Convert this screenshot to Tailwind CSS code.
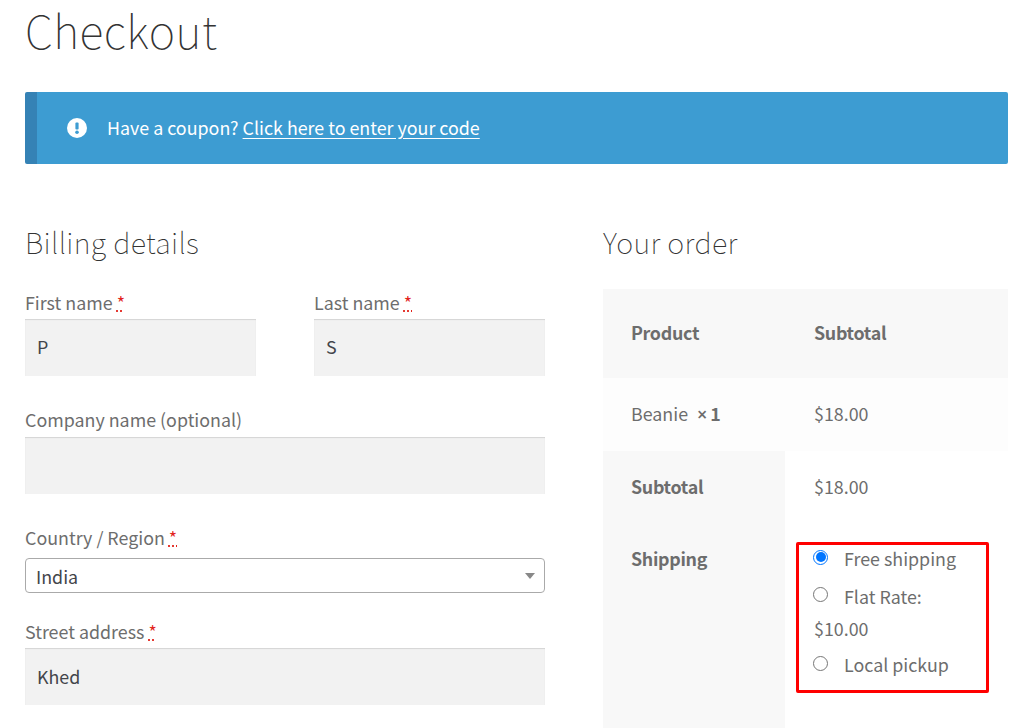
<!doctype html>
<html>
<head>
<meta charset="utf-8">
<script src="https://cdn.jsdelivr.net/npm/@tailwindcss/browser@4"></script>
</head>
<body class="bg-white overflow-hidden">
<div class="w-[1025px] h-[728px] overflow-hidden pl-[25px] pr-[17px] text-[#6d6d6d] text-[17.85px] font-['Noto_Sans_CJK_SC','Source_Sans_Pro',sans-serif]">
  <h1 class="h-[92px] text-[44.9px] leading-[60px] tracking-[0.5px] font-thin text-[#333333]">Checkout</h1>
  <div class="h-[72px] flex items-center bg-[#3d9cd2] border-l-[12px] border-[#3582b5] rounded-[2px] text-white">
    <svg class="ml-[30px] w-[20px] h-[20px]" viewBox="0 0 20 20"><circle cx="10" cy="10" r="10" fill="#fff"/><rect x="8.4" y="4.5" width="3.2" height="7" rx="1" fill="#3d9cd2"/><circle cx="10" cy="14.2" r="1.8" fill="#3d9cd2"/></svg>
    <p class="ml-[20px] leading-[28px] pb-[2px]">Have a coupon? <a class="underline underline-offset-[3px]">Click here to enter your code</a></p>
  </div>
  <div class="flex gap-[58px] mt-[54px]">
    <div class="w-[520px]">
      <h3 class="h-[46px] text-[28.9px] leading-[46px] tracking-[0.33px] font-thin text-[#333333]">Billing details</h3>
      <div class="mt-[23px] flex gap-[58px]">
        <div class="w-[231px]">
          <div class="h-[31px] mt-[1px] leading-[28px]">First name <span class="text-[#e2231a] underline decoration-dotted">*</span></div>
          <div class="h-[57px] px-[12px] pb-[2px] flex items-center bg-[#f2f2f2] shadow-[inset_0_1px_1px_rgba(0,0,0,0.125)] text-[#43454b]">P</div>
        </div>
        <div class="w-[231px]">
          <div class="h-[31px] mt-[1px] leading-[28px]">Last name <span class="text-[#e2231a] underline decoration-dotted">*</span></div>
          <div class="h-[57px] px-[12px] pb-[2px] flex items-center bg-[#f2f2f2] shadow-[inset_0_1px_1px_rgba(0,0,0,0.125)] text-[#43454b]">S</div>
        </div>
      </div>
      <div class="h-[32px] mt-[29px] leading-[28px]">Company name (optional)</div>
      <div class="h-[57px] bg-[#f2f2f2] shadow-[inset_0_1px_1px_rgba(0,0,0,0.125)]"></div>
      <div class="h-[30px] mt-[29px] leading-[28px]">Country / Region <span class="text-[#e2231a] underline decoration-dotted">*</span></div>
      <div class="relative h-[35px] mt-[5px] pl-[10px] pt-[2px] flex items-center border border-[#aaaaaa] rounded-[4px] text-[#43454b]">India
        <span class="absolute right-[9px] top-[14px] w-0 h-0 border-x-[5px] border-x-transparent border-t-[6px] border-t-[#888888]"></span>
      </div>
      <div class="h-[31px] mt-[24px] leading-[28px]">Street address <span class="text-[#e2231a] underline decoration-dotted">*</span></div>
      <div class="h-[57px] px-[12px] flex items-center bg-[#f2f2f2] shadow-[inset_0_1px_1px_rgba(0,0,0,0.125)] text-[#43454b]">Khed</div>
    </div>
    <div class="w-[405px]">
      <h3 class="h-[46px] text-[28.9px] leading-[46px] tracking-[0.33px] font-thin text-[#333333]">Your order</h3>
      <div class="mt-[25px] grid grid-cols-[182px_223px] grid-rows-[89px_73px_73px_1fr] h-[500px]">
        <div class="bg-[#f8f8f8] pl-[28px] pb-[2px] flex items-center font-semibold tracking-[-0.3px]">Product</div>
        <div class="bg-[#f8f8f8] pl-[29px] pb-[2px] flex items-center font-semibold tracking-[-0.3px]">Subtotal</div>
        <div class="bg-[#fdfdfd] pl-[28px] pb-[2px] flex items-center">Beanie<span class="ml-[9px] font-semibold"><span class="font-['Noto_Sans'] text-[18px]">×</span><span class="ml-[3px]">1</span></span></div>
        <div class="bg-[#fdfdfd] pl-[29px] pb-[2px] flex items-center">$18.00</div>
        <div class="bg-[#f8f8f8] pl-[28px] pb-[2px] flex items-center font-semibold tracking-[-0.3px]">Subtotal</div>
        <div class="pl-[29px] pb-[2px] flex items-center">$18.00</div>
        <div class="bg-[#f8f8f8] pl-[28px] pt-[20px] leading-[28px] font-semibold tracking-[-0.3px]">Shipping</div>
        <div class="relative pl-[28px]">
          <div class="absolute left-[11px] top-[18px] w-[193px] h-[151px] border-[3px] border-[#ff0000] rounded-[2px]"></div>
          <div class="pt-[20px] flex items-center h-[48px] mb-[4px] leading-[28px]">
            <span class="w-[15px] h-[15px] rounded-full border border-[#0075ff] mr-[16px] flex items-center justify-center relative top-[-1px]"><span class="w-[10px] h-[10px] rounded-full bg-[#0075ff]"></span></span>Free shipping
          </div>
          <div class="mt-[10px] flex items-center h-[28px] leading-[28px]">
            <span class="w-[15px] h-[15px] rounded-full border border-[#767676] mr-[16px] relative top-[-2px]"></span>Flat Rate:
          </div>
          <div class="mt-[4px] ml-[1px] h-[28px] leading-[28px]">$10.00</div>
          <div class="mt-[8px] flex items-center h-[28px] leading-[28px]">
            <span class="w-[15px] h-[15px] rounded-full border border-[#767676] mr-[16px] relative top-[-1px]"></span>Local pickup
          </div>
        </div>
      </div>
    </div>
  </div>
</div>
</body>
</html>
